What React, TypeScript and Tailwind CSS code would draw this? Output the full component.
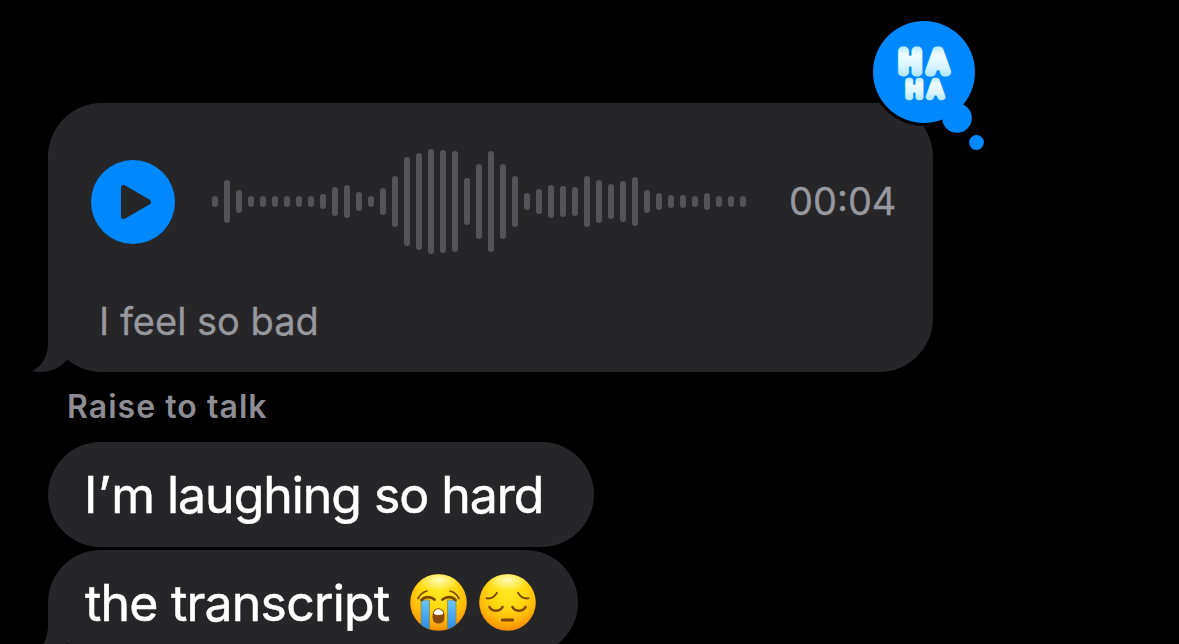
import type { ReactNode } from "react";

// Bar heights of the voice note, left to right
const waveform = [
  11, 43, 23, 11, 11, 11, 11, 11, 11, 15, 29, 33, 19, 11, 27, 51, 89, 97, 105, 103, 101, 47, 75, 101, 75,
  51, 17, 25, 33, 31, 29, 51, 43, 35, 41, 49, 23, 17, 13, 13, 11, 17, 11, 11, 11,
];

function BubbleTail() {
  return (
    <svg className="absolute bottom-0 -left-4 h-16 w-20" viewBox="0 0 80 64" fill="none">
      <path d="M16 12V35C16 47 11 58 0 63C13 66 26 62 35 52L44 40L17 12Z" fill="#262628" />
    </svg>
  );
}

function PlayButton() {
  return (
    <button aria-label="Play" className="flex size-[84px] shrink-0 items-center justify-center rounded-full bg-[#0088ff]">
      <svg className="size-[84px]" viewBox="0 0 84 84">
        <path d="M32.5 27.5V56.5L57.5 42Z" fill="#262628" stroke="#262628" strokeWidth="5" strokeLinejoin="round" />
      </svg>
    </button>
  );
}

function Waveform() {
  return (
    <div className="flex h-[105px] items-center gap-1.5">
      {waveform.map((height, i) => (
        <span key={i} className="w-1.5 rounded-full bg-[#545458]" style={{ height }} />
      ))}
    </div>
  );
}

function HahaReaction() {
  return (
    <svg className="absolute -top-[86px] left-[821px] h-[140px] w-[120px]" viewBox="0 0 120 140">
      <defs>
        <linearGradient id="puffy" x1="0" y1="0" x2="0" y2="1">
          <stop offset="0.05" stopColor="#b5e9fb" />
          <stop offset="0.3" stopColor="#f0fcff" />
          <stop offset="0.65" stopColor="#d8f5ff" />
          <stop offset="1" stopColor="#a4e2fc" />
        </linearGradient>
      </defs>
      <circle cx="55" cy="55" r="54" fill="#000" />
      <circle cx="55" cy="55" r="51" fill="#0088ff" />
      <circle cx="88" cy="101" r="14.8" fill="#0088ff" />
      <circle cx="107.5" cy="125.5" r="7.4" fill="#0088ff" />
      <g
        fill="url(#puffy)"
        stroke="url(#puffy)"
        strokeLinejoin="round"
        textAnchor="middle"
        className="font-[Inter,sans-serif] font-light"
      >
        <text x="54.5" y="54.5" fontSize="28" strokeWidth="8.8" letterSpacing="8" dx="4">HA</text>
        <text x="55.5" y="80" fontSize="21.5" strokeWidth="6.4" letterSpacing="6" dx="3">HA</text>
      </g>
    </svg>
  );
}

function EmojiFace({ children, label }: { children: ReactNode; label: string }) {
  return (
    <svg role="img" aria-label={label} className="size-[57px] shrink-0" viewBox="0 0 57 57">
      <defs>
        <radialGradient id="face" cx="0.5" cy="0.3" r="0.72">
          <stop offset="0" stopColor="#ffea20" />
          <stop offset="0.45" stopColor="#ffd80f" />
          <stop offset="0.75" stopColor="#ffb408" />
          <stop offset="1" stopColor="#f68603" />
        </radialGradient>
        <radialGradient id="shine">
          <stop offset="0" stopColor="#fffab8" />
          <stop offset="0.5" stopColor="#fff58a" stopOpacity="0.6" />
          <stop offset="1" stopColor="#ffe81c" stopOpacity="0" />
        </radialGradient>
        <linearGradient id="tear" x1="0" y1="0" x2="0" y2="1">
          <stop offset="0" stopColor="#6cc4f8" />
          <stop offset="0.6" stopColor="#3fa2ee" />
          <stop offset="1" stopColor="#2786e4" />
        </linearGradient>
        <clipPath id="faceClip">
          <circle cx="28.5" cy="28.5" r="28.3" />
        </clipPath>
      </defs>
      <circle cx="28.5" cy="28.5" r="28.3" fill="url(#face)" />
      <ellipse cx="28.5" cy="6" rx="25" ry="13" fill="url(#shine)" clipPath="url(#faceClip)" />
      {children}
    </svg>
  );
}

function CryingEmoji() {
  return (
    <EmojiFace label="Loudly crying face">
      <g clipPath="url(#faceClip)">
        <path d="M11 26H19.5V57H11Z" fill="url(#tear)" stroke="#8a8a38" strokeWidth="0.8" />
        <path d="M37.5 26H46V57H37.5Z" fill="url(#tear)" stroke="#8a8a38" strokeWidth="0.8" />
      </g>
      <g fill="none" stroke="#7c4700" strokeLinecap="round">
        <path d="M8 24.5C10 20.5 13 18 17 17" strokeWidth="1.7" />
        <path d="M49 24.5C47 20.5 44 18 40 17" strokeWidth="1.7" />
        <path d="M11.5 26C15 22 21 22.5 24.5 25.5" strokeWidth="2.8" />
        <path d="M32.5 25.5C36 22.5 42 22 45.5 26" strokeWidth="2.8" />
      </g>
      <path d="M22.5 42.5C22.5 37 25 34.3 28.5 34.3S34.5 37 34.5 42.5S32 49.5 28.5 49.5S22.5 48 22.5 42.5Z" fill="#8b4b08" />
      <path d="M23.8 40C24 36.8 26 35.3 28.5 35.3S33 36.8 33.2 40Q28.5 42.2 23.8 40Z" fill="#fff" />
    </EmojiFace>
  );
}

function PensiveEmoji() {
  return (
    <EmojiFace label="Pensive face">
      <g fill="none" stroke="#80490a" strokeLinecap="round">
        <path d="M7.5 24.3C12 25 16 22 18 18.7" strokeWidth="1.9" />
        <path d="M49.5 24.3C45 25 41 22 39 18.7" strokeWidth="1.9" />
        <path d="M10.5 33C13 38 21 38 23.5 33" strokeWidth="2.6" />
        <path d="M33.5 33C36 38 44 38 46.5 33" strokeWidth="2.6" />
        <path d="M23.3 46H33.7" strokeWidth="3" />
      </g>
    </EmojiFace>
  );
}

export default function App() {
  return (
    <main className="h-[644px] w-[1179px] overflow-hidden bg-black pt-[103px] pl-12 font-[Inter,sans-serif]">
      <section className="relative h-[269px] w-[885px] rounded-[54px] bg-[#262628] pt-[46px]">
        <BubbleTail />
        <div className="flex items-center pl-[43px]">
          <PlayButton />
          <div className="ml-[37px]">
            <Waveform />
          </div>
          <time className="-mt-0.5 ml-[43px] text-[38px] leading-none whitespace-nowrap text-[#98989f] [-webkit-text-stroke:0.3px_#98989f]">
            00:04
          </time>
        </div>
        <p className="mt-[43px] ml-[51px] text-[38px] leading-[48px] whitespace-nowrap text-[#98989f] [-webkit-text-stroke:0.3px_#98989f]">
          I feel so bad
        </p>
        <HahaReaction />
      </section>

      <p className="mt-[15px] ml-[19px] text-[32px] leading-10 font-semibold tracking-[1.05px] whitespace-nowrap text-[#8d8d93]">
        Raise to talk
      </p>

      <div className="mt-[15px] flex h-[105px] w-[546px] items-center rounded-full bg-[#262628] pl-9">
        <p className="text-[50px] leading-none tracking-[-1.05px] whitespace-nowrap text-white [-webkit-text-stroke:0.5px_#fff]">
          <span className="tracking-[0.4px]">I’</span>m laughing so hard
        </p>
      </div>

      <div className="relative mt-[3px] flex h-[105px] w-[530px] items-center rounded-full bg-[#262628] pl-[37px]">
        <BubbleTail />
        <p className="relative w-[325px] text-[50px] leading-none tracking-[-0.8px] whitespace-nowrap text-white [-webkit-text-stroke:0.5px_#fff]">
          the transcript
        </p>
        <div className="flex gap-3">
          <CryingEmoji />
          <PensiveEmoji />
        </div>
      </div>
    </main>
  );
}
